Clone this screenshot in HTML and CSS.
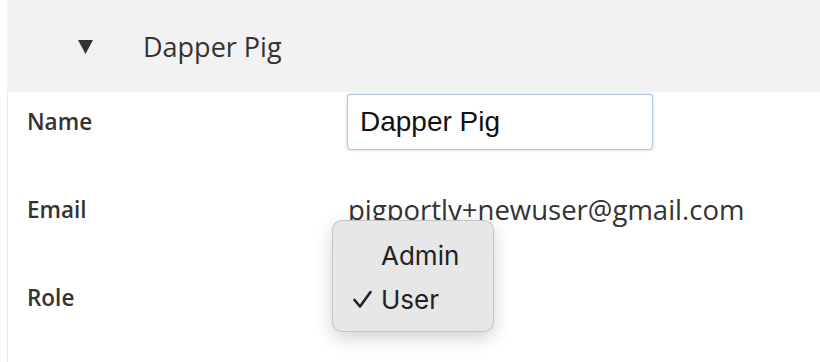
FILE: index.html
```html
<!DOCTYPE html>
<html lang="en">
<head>
    <meta charset="UTF-8">
    <title>Users - Dapper Pig</title>
    <link rel="stylesheet" href="styles.css">
</head>
<body>
    <div class="user-panel">
        <div class="user-header">
            <svg class="caret" width="15" height="14" viewBox="0 0 15 14">
                <polygon points="0,0 15,0 7.5,14" fill="#333"></polygon>
            </svg>
            <span class="user-title">Dapper Pig</span>
        </div>
        <div class="user-body">
            <div class="field-row">
                <label class="field-label" for="name">Name</label>
                <div class="field-value">
                    <input id="name" class="text-input" type="text" value="Dapper Pig">
                </div>
            </div>
            <div class="field-row">
                <span class="field-label">Email</span>
                <div class="field-value email">pigportly+newuser@gmail.com</div>
            </div>
            <div class="field-row">
                <span class="field-label">Role</span>
                <div class="field-value">
                    <div class="select-popup">
                        <div class="option"><span class="check"></span>Admin</div>
                        <div class="option selected">
                            <span class="check">
                                <svg width="19" height="19" viewBox="0 0 19 19">
                                    <polyline points="1.5,10 7,16.5 17.5,2" fill="none" stroke="#222" stroke-width="2.6" stroke-linecap="round" stroke-linejoin="round"></polyline>
                                </svg>
                            </span>User
                        </div>
                    </div>
                </div>
            </div>
        </div>
    </div>
</body>
</html>
```

FILE: styles.css
```css
/* Stile generale */
body {
    font-family: "Open Sans", sans-serif;
    margin: 0;
    padding: 0;
    background: white;
    color: #333;
}

.user-panel {
    margin-left: 7px;
    height: 362px;
    overflow: hidden;
}

.user-header {
    background: #f2f2f2;
    height: 92px;
    display: flex;
    align-items: center;
    padding-left: 71px;
}

.caret {
    margin-top: 2px;
}

.user-title {
    margin-left: 50px;
    font-size: 27px;
    color: #333;
}

.user-body {
    border-left: 1px solid #e8e8e8;
    height: 270px;
}

.field-row {
    display: flex;
    align-items: center;
    height: 58px;
    margin-bottom: 30px;
}

.field-label {
    width: 320px;
    padding-left: 19px;
    font-size: 22.5px;
    font-weight: 600;
    color: #333;
}

.field-value {
    position: relative;
    flex: 1;
}

.text-input {
    box-sizing: border-box;
    width: 306px;
    height: 56px;
    margin-top: 1px;
    padding: 0 12px;
    border: 1px solid #b3c2d3;
    border-radius: 4px;
    box-shadow: 0 0 3px rgba(110, 160, 210, 0.45);
    font-family: "Liberation Sans", Arial, sans-serif;
    font-size: 28px;
    color: #111;
    outline: none;
}

.email {
    font-size: 27.5px;
    color: #333;
    padding-left: 1px;
}

.select-popup {
    position: absolute;
    left: -15px;
    top: -77px;
    width: 162px;
    height: 112px;
    box-sizing: border-box;
    padding-top: 12px;
    background: #e7e7e7;
    border: 1px solid rgba(0, 0, 0, 0.15);
    border-radius: 10px;
    box-shadow: 0 6px 18px rgba(0, 0, 0, 0.18);
    font-family: Inter, sans-serif;
    font-size: 26px;
    color: #222;
}

.option {
    display: flex;
    align-items: center;
    height: 44px;
    padding-left: 20px;
}

.check {
    display: flex;
    width: 28px;
}
```
